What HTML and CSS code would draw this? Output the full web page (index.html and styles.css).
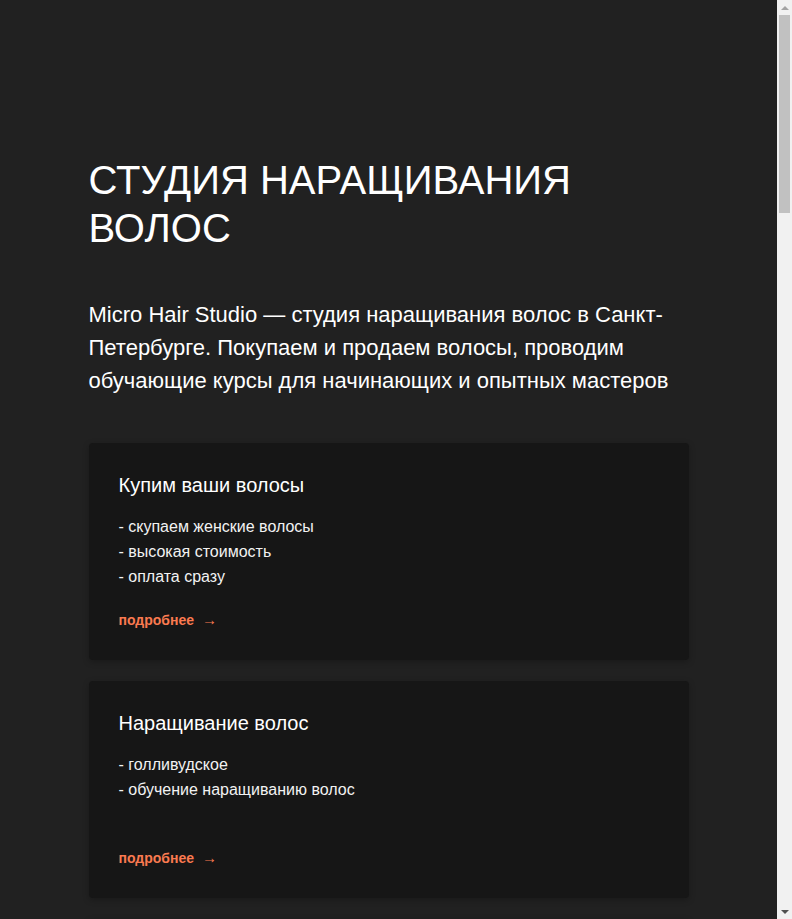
FILE: index.html
```html
<!DOCTYPE html>
<html lang="ru">
<head>
  <meta charset="UTF-8" />
  <meta name="viewport" content="width=device-width, initial-scale=1.0">
  <title>Micro Hair Studio</title>
  <link rel="stylesheet" href="styles.css">
</head>
<body>
  <div class="site">
    <main class="page">
      <section class="intro">
        <h1 class="intro-title">СТУДИЯ НАРАЩИВАНИЯ ВОЛОС</h1>
        <p class="intro-text">Micro Hair Studio — студия наращивания волос в Санкт-Петербурге. Покупаем и продаем волосы, проводим обучающие курсы для начинающих и опытных мастеров</p>
      </section>

      <section class="cards">
        <div class="card">
          <h2 class="card-title">Купим ваши волосы</h2>
          <ul class="card-list">
            <li>- скупаем женские волосы</li>
            <li>- высокая стоимость</li>
            <li>- оплата сразу</li>
          </ul>
          <a href="#" class="card-link">подробнее <span class="arrow">→</span></a>
        </div>

        <div class="card">
          <h2 class="card-title">Наращивание волос</h2>
          <ul class="card-list">
            <li>- голливудское</li>
            <li>- обучение наращиванию волос</li>
          </ul>
          <a href="#" class="card-link">подробнее <span class="arrow">→</span></a>
        </div>

        <div class="card">
          <h2 class="card-title">Продажа волос</h2>
          <ul class="card-list">
            <li>- славянские волосы</li>
            <li>- любая длина и цвет</li>
            <li>- доставка по России</li>
          </ul>
          <a href="#" class="card-link">подробнее <span class="arrow">→</span></a>
        </div>

        <div class="card">
          <h2 class="card-title">Обучающие курсы</h2>
          <ul class="card-list">
            <li>- для начинающих мастеров</li>
            <li>- повышение квалификации</li>
            <li>- сертификат по окончании</li>
          </ul>
          <a href="#" class="card-link">подробнее <span class="arrow">→</span></a>
        </div>
      </section>

      <section class="works">
        <h2 class="section-title">НАШИ РАБОТЫ</h2>
        <div class="works-grid">
          <div class="work"></div>
          <div class="work"></div>
          <div class="work"></div>
          <div class="work"></div>
          <div class="work"></div>
          <div class="work"></div>
          <div class="work"></div>
          <div class="work"></div>
        </div>
      </section>

      <section class="contacts">
        <h2 class="section-title">КОНТАКТЫ</h2>
        <p class="contacts-text">Санкт-Петербург<br>Ежедневно с 10:00 до 21:00<br>Запись по телефону и в мессенджерах</p>
      </section>
    </main>

    <footer class="footer">© Micro Hair Studio</footer>
  </div>

  <!-- полоса прокрутки браузера -->
  <aside class="scrollbar">
    <div class="scrollbar-inner">
      <span class="sb-btn sb-up"></span>
      <span class="sb-thumb"></span>
      <span class="sb-track"></span>
      <span class="sb-btn sb-down"></span>
    </div>
  </aside>
</body>
</html>
```

FILE: styles.css
```css
html, body {
  margin: 0;
  padding: 0;
  background-color: #212121;
  color: #fff;
  font-family: 'Liberation Sans', Arial, sans-serif;
}

body {
  display: flex;
  align-items: stretch;
}

.site {
  flex: 1;
  min-width: 0;
}

.page {
  width: 600px;
  margin: 0 auto;
  padding-top: 156px;
}

.intro-title {
  margin: 0;
  font-size: 40px;
  line-height: 48px;
  font-weight: 400;
}

.intro-text {
  margin: 46px 0 0;
  font-size: 22px;
  line-height: 33px;
}

.cards {
  margin-top: 46px;
  display: flex;
  flex-direction: column;
  gap: 21px;
}

.card {
  box-sizing: border-box;
  min-height: 217px;
  padding: 30px;
  background-color: #161616;
  border-radius: 4px;
  box-shadow: 0 2px 6px rgba(0, 0, 0, 0.25);
  display: flex;
  flex-direction: column;
}

.card-title {
  margin: 0 0 17px;
  font-size: 20px;
  line-height: 24px;
  font-weight: 400;
}

.card-list {
  margin: 0 0 21px;
  padding: 0;
  list-style: none;
  font-size: 16px;
  line-height: 25px;
  color: #f2f2f2;
}

.card-link {
  margin-top: auto;
  font-size: 14px;
  line-height: 20px;
  font-weight: 700;
  color: #fa7a50;
  text-decoration: none;
}

.card-link .arrow {
  margin-left: 4px;
  font-size: 15px;
}

.section-title {
  margin: 0 0 40px;
  font-size: 32px;
  line-height: 40px;
  font-weight: 400;
}

.works {
  margin-top: 120px;
}

.works-grid {
  display: grid;
  grid-template-columns: repeat(2, 1fr);
  gap: 20px;
}

.work {
  aspect-ratio: 1 / 1;
  background-color: #2b2b2b;
  border-radius: 4px;
}

.contacts {
  margin-top: 120px;
  padding-bottom: 120px;
}

.contacts-text {
  margin: 0;
  font-size: 18px;
  line-height: 30px;
  color: #ddd;
}

.footer {
  padding: 40px 0 60px;
  text-align: center;
  font-size: 14px;
  color: #888;
}

/* scrollbar */
.scrollbar {
  width: 15px;
  flex-shrink: 0;
  background-color: #f1f1f1;
}

.scrollbar-inner {
  position: sticky;
  top: 0;
  height: 100vh;
  display: flex;
  flex-direction: column;
}

.sb-btn {
  height: 14px;
  flex-shrink: 0;
  display: flex;
  justify-content: center;
  align-items: center;
}

.sb-btn::before {
  content: "";
  width: 0;
  height: 0;
  border-left: 4px solid transparent;
  border-right: 4px solid transparent;
}

.sb-up::before {
  border-bottom: 4px solid #a3a3a3;
  margin-top: 1px;
}

.sb-down::before {
  border-top: 4px solid #505050;
  margin-top: -1px;
}

.sb-thumb {
  height: 198px;
  margin: 1px 2px 0;
  background-color: #c1c1c1;
}

.sb-track {
  flex: 1;
}
```
